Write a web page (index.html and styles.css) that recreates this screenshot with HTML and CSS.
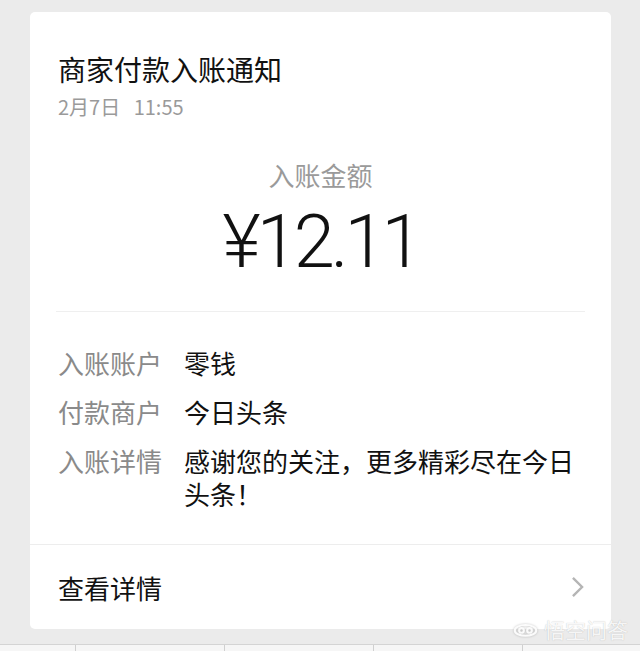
FILE: index.html
```html
<!DOCTYPE html>
<html lang="zh-CN">
<head>
  <meta charset="UTF-8">
  <title>商家付款入账通知</title>
  <meta name="viewport" content="width=device-width, initial-scale=1">
  <link rel="stylesheet" href="styles.css">
</head>
<body>
  <div class="card">
    <div class="card-body">
      <h2 class="title">商家付款入账通知</h2>
      <div class="date">2月7日&nbsp;&nbsp;&nbsp;11:55</div>

      <div class="amount-label">入账金额</div>
      <div class="amount">¥12.11</div>

      <div class="divider"></div>

      <div class="rows">
        <div class="row">
          <span class="row-label">入账账户</span>
          <span class="row-value">零钱</span>
        </div>
        <div class="row">
          <span class="row-label">付款商户</span>
          <span class="row-value">今日头条</span>
        </div>
        <div class="row">
          <span class="row-label">入账详情</span>
          <span class="row-value">感谢您的关注，更多精彩尽在今日头条！</span>
        </div>
      </div>
    </div>

    <div class="card-footer">
      <span>查看详情</span>
      <svg class="chevron" viewBox="0 0 14 24">
        <polyline points="2,2 12,12 2,22" />
      </svg>
    </div>
  </div>

  <div class="tabbar">
    <span></span><span></span><span></span><span></span><span></span>
  </div>

  <div class="watermark">
    <svg viewBox="0 0 28 16">
      <ellipse cx="14" cy="9" rx="12" ry="6" />
      <circle cx="9.5" cy="9" r="2.6" />
      <circle cx="18.5" cy="9" r="2.6" />
    </svg>
    悟空问答
  </div>
</body>
</html>
```

FILE: styles.css
```css
body {
  font-family: "Noto Sans CJK SC", sans-serif;
  background: #ebebeb;
  margin: 0;
  height: 651px;
  overflow: hidden;
  position: relative;
}
.card {
  margin: 12px 29px 0 30px;
  background: #fff;
  border-radius: 5px;
}
.card-body {
  padding: 39px 28px 34px 28px;
}
.title {
  margin: 0;
  font-size: 28px;
  line-height: 36px;
  font-weight: normal;
  color: #111;
}
.date {
  margin-top: 6px;
  font-size: 20px;
  line-height: 28px;
  color: #9a9a9a;
}
.amount-label {
  margin-top: 37px;
  text-align: center;
  font-size: 26px;
  line-height: 34px;
  color: #9a9a9a;
}
.amount {
  margin-top: 10px;
  text-align: center;
  font-family: Roboto, "Liberation Sans", sans-serif;
  font-weight: 300;
  font-size: 74px;
  line-height: 80px;
  letter-spacing: -4px;
  color: #111;
}
.divider {
  margin: 29px -2px 0 -2px;
  border-top: 1px solid #efefef;
}
.rows {
  margin-top: 34px;
  display: flex;
  flex-direction: column;
  gap: 16px;
}
.row {
  display: flex;
  font-size: 26px;
  line-height: 33px;
}
.row-label {
  flex: none;
  width: 126px;
  color: #8a8a8a;
}
.row-value {
  color: #111;
}
.card-footer {
  border-top: 1px solid #ededed;
  height: 84px;
  padding: 0 27px 0 28px;
  display: flex;
  align-items: center;
  justify-content: space-between;
  font-size: 26px;
  color: #111;
}
.chevron {
  width: 13px;
  height: 22px;
  fill: none;
  stroke: #b5b5b5;
  stroke-width: 2.6;
}
.tabbar {
  margin-top: 15px;
  height: 7px;
  border-top: 1px solid #d4d4d4;
  background: #f6f6f6;
  display: grid;
  grid-template-columns: 75px repeat(4, 149px);
}
.tabbar span + span {
  border-left: 1px solid #d0d0d0;
}
.watermark {
  position: absolute;
  right: 12px;
  bottom: 11px;
  display: flex;
  align-items: center;
  gap: 6px;
  font-size: 21px;
  line-height: 22px;
  color: rgba(255, 255, 255, 0.9);
  text-shadow: 0 0 1px rgba(0, 0, 0, 0.25);
}
.watermark svg {
  width: 25px;
  height: 15px;
  fill: none;
  stroke: rgba(255, 255, 255, 0.9);
  stroke-width: 2.4;
  filter: drop-shadow(0 0 1px rgba(0, 0, 0, 0.25));
}
```
